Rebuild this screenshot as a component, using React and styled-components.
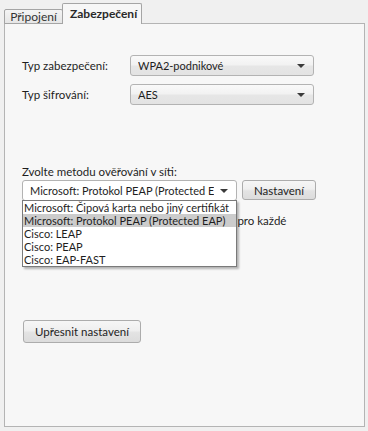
import styled, { createGlobalStyle } from "styled-components";

const Global = createGlobalStyle`
  html, body {
    margin: 0;
    padding: 0;
    background: #f0f0f0;
    font-family: Lato, "Liberation Sans", sans-serif;
    font-size: 11px;
    line-height: 15px;
    color: #1e1e1e;
  }
`;

const Window = styled.div`
  width: 368px;
  height: 431px;
  padding: 3px 0 0 4px;
  box-sizing: border-box;
  overflow: hidden;
`;

const TabStrip = styled.div`
  display: flex;
  align-items: flex-end;
  height: 21px;
  position: relative;
  z-index: 1;
  margin-bottom: -1px;
`;

const Tab = styled.div`
  box-sizing: border-box;
  border: 1px solid #a5a5a5;
  border-bottom: ${(p) => (p.$active ? "none" : "1px solid #a5a5a5")};
  border-radius: 2px 2px 0 0;
  padding: 0 ${(p) => (p.$active ? "7px" : "5px")};
  width: ${(p) => (p.$active ? "80px" : "59px")};
  text-align: center;
  height: ${(p) => (p.$active ? "21px" : "15px")};
  line-height: ${(p) => (p.$active ? "19px" : "14px")};
  font-size: 12px;
  background: ${(p) =>
    p.$active ? "#f7f7f7" : "linear-gradient(#f4f4f4, #e6e6e6)"};
  font-weight: ${(p) => (p.$active ? 700 : 400)};
  color: ${(p) => (p.$active ? "#2a2a2a" : "#333")};
  margin-left: ${(p) => (p.$active ? "-1px" : "0")};
  white-space: nowrap;
`;

const Panel = styled.div`
  box-sizing: border-box;
  width: 361px;
  height: 404px;
  border: 1px solid #b4b4b4;
  background: #f7f7f7;
  padding: 31px 0 0 17px;
  position: relative;
`;

const FieldGrid = styled.div`
  display: grid;
  grid-template-columns: 108px 184px;
  row-gap: 8px;
  align-items: center;
`;

const Label = styled.div`
  white-space: nowrap;
  font-size: 11.5px;
`;

const Select = styled.div`
  box-sizing: border-box;
  height: 21px;
  width: ${(p) => p.$width || "184px"};
  border: 1px solid #b3b3b3;
  border-radius: 3px;
  background: ${(p) =>
    p.$open
      ? "#ffffff"
      : "linear-gradient(#f9f9f9 0%, #f2f2f2 45%, #e6e6e6 55%, #e3e3e3 100%)"};
  display: flex;
  align-items: center;
  padding: 0 8px 0 7px;
  gap: 6px;
`;

const SelectText = styled.span`
  flex: 1;
  overflow: hidden;
  white-space: nowrap;
`;

const Arrow = styled.span`
  width: 0;
  height: 0;
  border-left: 4px solid transparent;
  border-right: 4px solid transparent;
  border-top: 4px solid #3a3a3a;
  flex-shrink: 0;
`;

const MethodSection = styled.div`
  margin-top: 59px;
  position: relative;
`;

const MethodRow = styled.div`
  display: flex;
  gap: 5px;
  margin-top: 1px;
  position: relative;
`;

const Button = styled.div`
  box-sizing: border-box;
  height: ${(p) => p.$h || "20px"};
  width: ${(p) => p.$w};
  border: 1px solid #acacac;
  border-radius: 3px;
  background: linear-gradient(#f6f6f6 0%, #efefef 45%, #e3e3e3 55%, #dcdcdc 100%);
  display: flex;
  align-items: center;
  justify-content: center;
  color: #1e1e1e;
  white-space: nowrap;
  font-size: 11.5px;
`;

const DropList = styled.ul`
  position: absolute;
  left: 0;
  top: 20px;
  width: 215px;
  box-sizing: border-box;
  margin: 0;
  padding: 0;
  list-style: none;
  background: #ffffff;
  border: 1px solid #7a7a7a;
  box-shadow: 2px 2px 2px rgba(0, 0, 0, 0.28);
  z-index: 2;
`;

const DropItem = styled.li`
  height: 13px;
  line-height: 13px;
  padding-left: 1px;
  white-space: nowrap;
  overflow: hidden;
  background: ${(p) => (p.$selected ? "#cccccc" : "transparent")};
`;

const CheckRow = styled.div`
  display: flex;
  gap: 16px;
  margin-top: 13px;
  align-items: flex-start;
`;

const CheckBox = styled.span`
  width: 11px;
  height: 11px;
  border: 1px solid #8a8a8a;
  background: #fff;
  flex-shrink: 0;
  margin-top: 1px;
`;

const CheckText = styled.div`
  line-height: 14px;
  width: 250px;
  font-size: 11.5px;
`;

const Advanced = styled.div`
  margin-top: 78px;
  margin-left: 1px;
`;

const methods = [
  "Microsoft: Čipová karta nebo jiný certifikát",
  "Microsoft: Protokol PEAP (Protected EAP)",
  "Cisco: LEAP",
  "Cisco: PEAP",
  "Cisco: EAP-FAST",
];

export default function App() {
  return (
    <Window>
      <Global />
      <TabStrip>
        <Tab>Připojení</Tab>
        <Tab $active>Zabezpečení</Tab>
      </TabStrip>
      <Panel>
        <FieldGrid>
          <Label>Typ zabezpečení:</Label>
          <Select>
            <SelectText>WPA2-podnikové</SelectText>
            <Arrow />
          </Select>
          <Label>Typ šifrování:</Label>
          <Select>
            <SelectText>AES</SelectText>
            <Arrow />
          </Select>
        </FieldGrid>

        <MethodSection>
          <Label>Zvolte metodu ověřování v síti:</Label>
          <MethodRow>
            <Select $width="215px" $open>
              <SelectText>Microsoft: Protokol PEAP (Protected EAP)</SelectText>
              <Arrow />
            </Select>
            <Button $w="74px">Nastavení</Button>
            <DropList>
              {methods.map((m, i) => (
                <DropItem key={m} $selected={i === 1}>
                  {m}
                </DropItem>
              ))}
            </DropList>
          </MethodRow>
          <CheckRow>
            <CheckBox />
            <CheckText>
              Pamatovat si přihlašovací údaje k síti pro každé přihlášení
            </CheckText>
          </CheckRow>
        </MethodSection>

        <Advanced>
          <Button $w="118px" $h="23px">
            Upřesnit nastavení
          </Button>
        </Advanced>
      </Panel>
    </Window>
  );
}
